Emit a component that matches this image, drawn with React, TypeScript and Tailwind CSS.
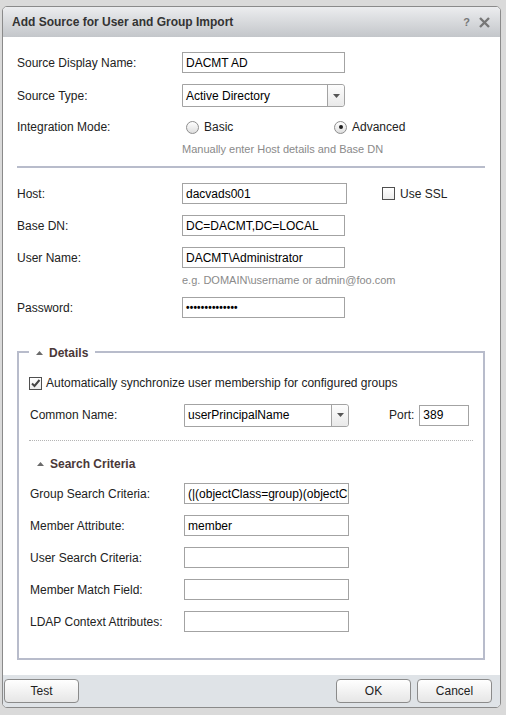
import React from "react";

function Field({ value = "", className = "w-[163px]", children }: { value?: string; className?: string; children?: React.ReactNode }) {
  return (
    <div className={`${className} h-[21px] shrink-0 border border-[#a3a3a3] bg-white pl-[3px] flex items-center text-black overflow-hidden whitespace-nowrap`}>
      {children ?? value}
    </div>
  );
}

function Select({ value, className }: { value: string; className: string }) {
  return (
    <div className={`${className} h-[23px] shrink-0 flex border border-[#a3a3a3] rounded-r-[3px] bg-white`}>
      <div className="flex-1 pl-[3px] flex items-center text-black whitespace-nowrap overflow-hidden">{value}</div>
      <div className="w-[17px] border-l border-[#a3a3a3] bg-gradient-to-b from-[#fdfdfd] to-[#e9e9e9] rounded-r-[3px] flex items-center justify-center">
        <svg width="7" height="4" viewBox="0 0 7 4">
          <path d="M0 0h7L3.5 4z" fill="#555" />
        </svg>
      </div>
    </div>
  );
}

function Radio({ checked }: { checked?: boolean }) {
  return (
    <span className="w-[13px] h-[13px] shrink-0 rounded-full border border-[#8e8e8e] bg-gradient-to-b from-white to-[#dedede] flex items-center justify-center">
      {checked && <span className="w-[4px] h-[4px] rounded-full bg-[#1e1e1e]" />}
    </span>
  );
}

function Checkbox({ checked }: { checked?: boolean }) {
  return (
    <span className="w-[13px] h-[13px] shrink-0 border border-[#4f4f4f] bg-gradient-to-b from-white to-[#ececec] flex items-center justify-center">
      {checked && (
        <svg width="11" height="11" viewBox="0 0 11 11">
          <path d="M2 5.5l2.5 2.5L9.5 2" fill="none" stroke="#444" strokeWidth="2" />
        </svg>
      )}
    </span>
  );
}

function Tri() {
  return (
    <svg width="7" height="4" viewBox="0 0 7 4" className="shrink-0">
      <path d="M0 4h7L3.5 0z" fill="#6a6a6a" />
    </svg>
  );
}

function Row({ label, children, className = "", labelW = "w-[165px]", h = "h-[21px]" }: { label: string; children: React.ReactNode; className?: string; labelW?: string; h?: string }) {
  return (
    <div className={`flex items-center ${h} ${className}`}>
      <div className={`${labelW} shrink-0 text-[#222] whitespace-nowrap`}>{label}</div>
      {children}
    </div>
  );
}

function Btn({ children }: { children: React.ReactNode }) {
  return (
    <div className="w-[75px] h-[24px] rounded-[4px] border border-[#8b8b8b] bg-gradient-to-b from-white to-[#e6e6e6] flex items-center justify-center text-[#222]">
      {children}
    </div>
  );
}

export default function App() {
  return (
    <div className="min-h-[715px] bg-[#dadada] pt-[6px] pl-[2px] font-['Liberation_Sans',Arial,sans-serif] text-[12px] leading-[14px]">
      <div className="w-[499px] h-[702px] border border-[#8a8a8a] rounded-[5px] overflow-hidden bg-white flex flex-col">
        {/* Header */}
        <div className="h-[30px] shrink-0 bg-gradient-to-b from-[#ecedef] to-[#c3c6ca] flex items-center pl-[9px] pr-[10px]">
          <div className="flex-1 font-bold text-[#333]">Add Source for User and Group Import</div>
          <span className="font-bold text-[11px] text-[#777] mr-[9px]">?</span>
          <svg width="11" height="11" viewBox="0 0 11 11">
            <path d="M1 1l9 9M10 1l-9 9" stroke="#777" strokeWidth="2.4" />
          </svg>
        </div>

        {/* Body */}
        <div className="flex-1 flex flex-col pl-[14px] pt-[15px]">
          <Row label="Source Display Name:">
            <Field value="DACMT AD" />
          </Row>
          <Row label="Source Type:" className="mt-[11px]" h="h-[23px]">
            <Select value="Active Directory" className="w-[163px]" />
          </Row>
          <Row label="Integration Mode:" className="mt-[12px]" h="h-[16px]">
            <div className="flex items-center">
              <div className="w-[152px] flex items-center gap-[5px] pl-[4px]">
                <Radio />
                <span className="text-[#222]">Basic</span>
              </div>
              <div className="flex items-center gap-[5px]">
                <Radio checked />
                <span className="text-[#222]">Advanced</span>
              </div>
            </div>
          </Row>
          <div className="mt-[7px] pl-[165px] text-[11px] text-[#8a8a8a]">Manually enter Host details and Base DN</div>
          <div className="mt-[10px] w-[468px] h-[2px] bg-[#b8bccb]" />

          <Row label="Host:" className="mt-[15px]">
            <Field value="dacvads001" className="w-[165px]" />
            <div className="ml-[35px] flex items-center gap-[5px]">
              <Checkbox />
              <span className="text-[#222]">Use SSL</span>
            </div>
          </Row>
          <Row label="Base DN:" className="mt-[11px]">
            <Field value="DC=DACMT,DC=LOCAL" />
          </Row>
          <Row label="User Name:" className="mt-[11px]">
            <Field value="DACMT\Administrator" />
          </Row>
          <div className="mt-[5px] pl-[165px] text-[11px] text-[#8a8a8a]">e.g. DOMAIN\username or admin@foo.com</div>
          <Row label="Password:" className="mt-[10px]">
            <Field className="w-[163px]">
              <span className="text-[10px] tracking-[0.2px] font-bold leading-[10px]">••••••••••••••</span>
            </Field>
          </Row>

          {/* Details */}
          <fieldset className="mt-[26px] w-[468px] border-2 border-[#b8bccb] pl-[11px] pr-[10px] pb-[26px]">
            <legend className="ml-[-1px] px-[7px]">
              <span className="inline-flex items-center gap-[6px] font-bold text-[#4a3838] leading-[14px]">
                <Tri />
                Details
              </span>
            </legend>
            <div className="mt-[16px] h-[14px] flex items-center gap-[4px] ml-[-1px]">
              <Checkbox checked />
              <span className="text-[#222] whitespace-nowrap">Automatically synchronize user membership for configured groups</span>
            </div>
            <Row label="Common Name:" labelW="w-[154px]" className="mt-[14px]" h="h-[22px]">
              <Select value="userPrincipalName" className="w-[165px] h-[22px]" />
              <span className="ml-[40px] text-[#222]">Port:</span>
              <Field value="389" className="ml-[5px] w-[50px]" />
            </Row>
            <div className="mt-[14px] ml-[-1px] w-[444px] border-t border-dotted border-[#b5b5b5]" />
            <div className="mt-[16px] pl-[7px] flex items-center gap-[6px] font-bold text-[#4a3838] h-[14px]">
              <Tri />
              Search Criteria
            </div>
            <Row label="Group Search Criteria:" labelW="w-[154px]" className="mt-[12px]">
              <input
                readOnly
                value="(|(objectClass=group)(objectClass=groupOfNames))"
                className="w-[165px] h-[21px] shrink-0 border border-[#a3a3a3] bg-white pl-[3px] text-black text-[12px] outline-none font-['Liberation_Sans',Arial,sans-serif]"
              />
            </Row>
            <Row label="Member Attribute:" labelW="w-[154px]" className="mt-[11px]">
              <Field value="member" className="w-[165px]" />
            </Row>
            <Row label="User Search Criteria:" labelW="w-[154px]" className="mt-[11px]">
              <Field className="w-[165px]" />
            </Row>
            <Row label="Member Match Field:" labelW="w-[154px]" className="mt-[11px]">
              <Field className="w-[165px]" />
            </Row>
            <Row label="LDAP Context Attributes:" labelW="w-[154px]" className="mt-[11px]">
              <Field className="w-[165px]" />
            </Row>
          </fieldset>
        </div>

        {/* Footer */}
        <div className="h-[32px] shrink-0 bg-[#dfe3e7] flex items-center pl-[1px] pr-[8px]">
          <Btn>Test</Btn>
          <div className="flex-1" />
          <div className="flex gap-[6px]">
            <Btn>OK</Btn>
            <Btn>Cancel</Btn>
          </div>
        </div>
      </div>
    </div>
  );
}
